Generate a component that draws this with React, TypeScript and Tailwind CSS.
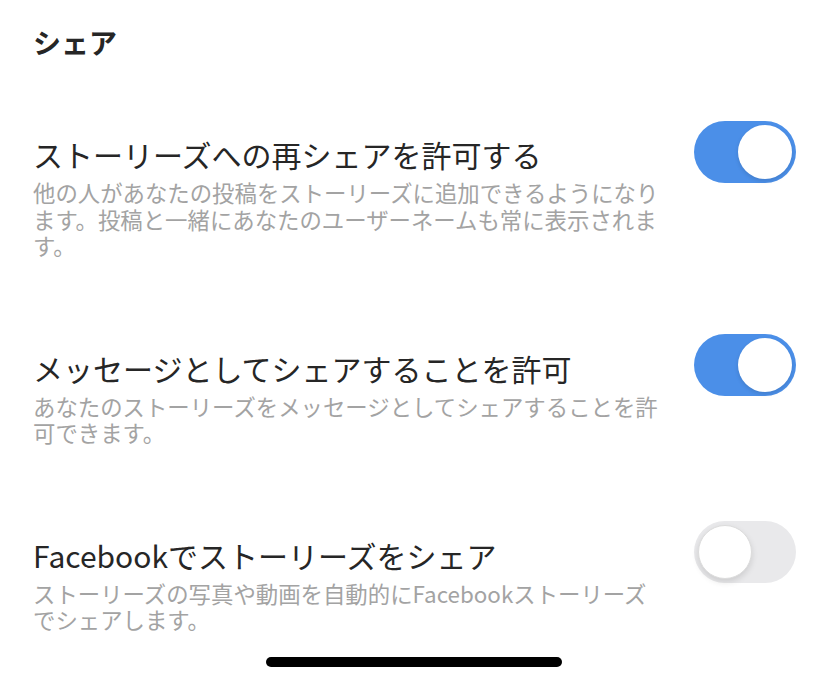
import React, { useState } from 'react'

type Setting = {
  id: string
  title: string
  desc: string
  on: boolean
}

const settings: Setting[] = [
  {
    id: 'reshare',
    title: 'ストーリーズへの再シェアを許可する',
    desc: '他の人があなたの投稿をストーリーズに追加できるようになります。投稿と一緒にあなたのユーザーネームも常に表示されます。',
    on: true,
  },
  {
    id: 'message',
    title: 'メッセージとしてシェアすることを許可',
    desc: 'あなたのストーリーズをメッセージとしてシェアすることを許可できます。',
    on: true,
  },
  {
    id: 'facebook',
    title: 'Facebookでストーリーズをシェア',
    desc: 'ストーリーズの写真や動画を自動的にFacebookストーリーズでシェアします。',
    on: false,
  },
]

const Toggle = ({ on, onClick }: { on: boolean; onClick: () => void }) => (
  <button
    onClick={onClick}
    className={`-mt-[5px] flex h-[62px] w-[102px] shrink-0 items-center rounded-full p-[4px] transition-colors duration-200 ${
      on ? 'justify-end bg-[#4b8fe8]' : 'justify-start bg-[#e9e9eb]'
    }`}
  >
    <span
      className={`block h-[54px] w-[54px] rounded-full bg-white ${
        on ? 'shadow-[0_2px_4px_rgba(0,0,0,0.12)]' : 'border border-[#dcdcdc] shadow-[0_3px_6px_rgba(0,0,0,0.12)]'
      }`}
    />
  </button>
)

export default function App() {
  const [values, setValues] = useState(settings.map((s) => s.on))

  return (
    <div
      className="relative h-[683px] w-[828px] overflow-hidden bg-white text-[#262626]"
      style={{ fontFamily: '"Noto Sans CJK JP", "Noto Sans", sans-serif' }}
    >
      <h1 className="px-[33px] pt-[25px] text-[28px] font-bold leading-[34px]">シェア</h1>

      <div className="mt-[77px] flex flex-col gap-[91px] pl-[33px] pr-[32px]">
        {settings.map((s, i) => (
          <div key={s.id}>
            <div className="flex h-[36px] items-center justify-between">
              <span className="text-[30px] leading-[36px]">{s.title}</span>
              <Toggle
                on={values[i]}
                onClick={() => setValues((v) => v.map((x, j) => (j === i ? !x : x)))}
              />
            </div>
            <p className="mt-[7px] w-[629px] text-[22.4px] leading-[26.5px] text-[#a3a3a3]">{s.desc}</p>
          </div>
        ))}
      </div>

      <div className="absolute bottom-[16px] left-1/2 h-[10px] w-[296px] -translate-x-1/2 rounded-full bg-black" />
    </div>
  )
}
